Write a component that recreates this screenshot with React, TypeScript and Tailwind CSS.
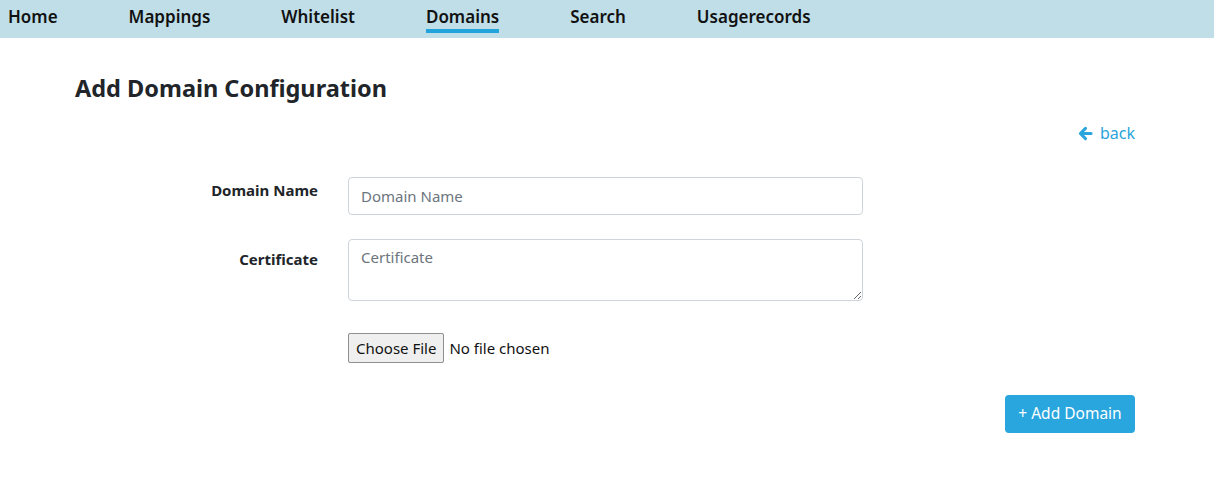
const navItems = ["Home", "Mappings", "Whitelist", "Domains", "Search", "Usagerecords"];

function BackArrow() {
  return (
    <svg viewBox="0 0 16 16" className="w-[15px] h-[15px]" fill="none">
      <path
        d="M8 2.5 L2.5 8 L8 13.5 M3 8 H14"
        stroke="currentColor"
        strokeWidth={3.2}
        strokeLinecap="round"
        strokeLinejoin="round"
      />
    </svg>
  );
}

export default function App() {
  return (
    <div className="min-h-[494px] bg-white text-[#212529] font-['Noto_Sans','Open_Sans',sans-serif]">
      <nav className="h-[38px] bg-[#bfdee8] flex items-start gap-[71px] pl-[8px]">
        {navItems.map((item) => (
          <div key={item} className="relative pt-[4px] text-[17px] leading-[26px] font-semibold text-[#111]">
            {item}
            {item === "Domains" && (
              <div className="absolute left-0 right-0 top-[29px] h-[4px] bg-[#22a3dc]" />
            )}
          </div>
        ))}
      </nav>

      <div className="w-[1060px] ml-[75px]">
        <h3 className="mt-[33px] text-[23.5px] leading-[34px] font-bold text-[#212529]">
          Add Domain Configuration
        </h3>

        <div className="flex justify-end mt-[16px]">
          <a className="flex items-center gap-[7px] text-[16px] leading-[24px] text-[#2aa4dc] cursor-pointer">
            <BackArrow />
            back
          </a>
        </div>

        <div className="mt-[32px] flex flex-col">
          <div className="flex gap-[30px]">
            <label className="ml-[91px] w-[152px] text-right text-[15px] leading-[24px] font-bold pt-[1px]">
              Domain Name
            </label>
            <input
              placeholder="Domain Name"
              className="w-[515px] h-[38px] border border-[#ced4da] rounded-[4px] px-[12px] text-[15px] placeholder:text-[#6c757d] outline-none"
            />
          </div>

          <div className="flex gap-[30px] mt-[24px]">
            <label className="ml-[91px] w-[152px] text-right text-[15px] leading-[24px] font-bold pt-[8px]">
              Certificate
            </label>
            <textarea
              placeholder="Certificate"
              className="w-[515px] h-[62px] border border-[#ced4da] rounded-[4px] px-[12px] py-[6px] text-[15px] placeholder:text-[#6c757d] outline-none"
            />
          </div>

          <div className="flex items-center mt-[32px] ml-[273px]">
            <button className="h-[30px] px-[7px] border border-[#8f8f8f] bg-[#efefef] rounded-[2px] text-[15px] text-[#111]">
              Choose File
            </button>
            <span className="ml-[5px] text-[15px] text-[#111]">No file chosen</span>
          </div>
        </div>

        <div className="flex justify-end mt-[32px]">
          <button className="h-[38px] w-[130px] rounded-[4px] bg-[#29a6de] text-white text-[15.5px]">
            + Add Domain
          </button>
        </div>
      </div>
    </div>
  );
}
